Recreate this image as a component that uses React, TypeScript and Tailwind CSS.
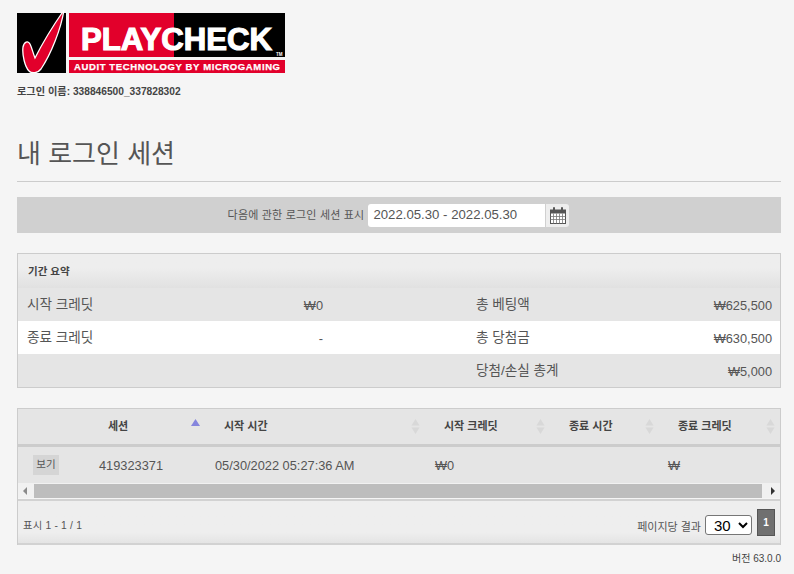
const font = "font-['Liberation_Sans','Noto_Sans_CJK_KR',sans-serif]";

function Logo() {
  return (
    <svg width="268" height="64" viewBox="0 0 268 64" className="block">
      <rect x="0" y="4" width="49" height="60" fill="#000" />
      <rect x="52" y="4" width="105" height="44" fill="#e2002b" />
      <rect x="157" y="4" width="111" height="44" fill="#000" />
      <rect x="52" y="51" width="216" height="13" fill="#e2002b" />
      <path
        d="M47 1 C44 20 34 45 24 60 C21 64 15 65 12 62 C8 58 5 46 6 38 C7 33 11 31 13 35 C15 39 16 44 18 49 C26 33 38 14 47 1 Z"
        fill="#e2002b"
        stroke="#fff"
        strokeWidth="1.3"
      />
      <text
        x="64"
        y="41"
        fontFamily="Liberation Sans"
        fontWeight="700"
        fontSize="32"
        fill="#fff"
        stroke="#fff"
        strokeWidth="1.2"
        textLength="191"
        lengthAdjust="spacingAndGlyphs"
      >
        PLAYCHECK
      </text>
      <text x="259" y="47" fontFamily="Liberation Sans" fontWeight="700" fontSize="4.5" fill="#fff">
        TM
      </text>
      <text
        x="57"
        y="61"
        fontFamily="Liberation Sans"
        fontWeight="700"
        fontSize="9.5"
        fill="#fff"
        stroke="#fff"
        strokeWidth="0.25"
        textLength="206"
        lengthAdjust="spacing"
      >
        AUDIT TECHNOLOGY BY MICROGAMING
      </text>
    </svg>
  );
}

function CalendarIcon() {
  return (
    <svg width="16" height="17" viewBox="0 0 16 17" className="block">
      <rect x="0.5" y="3" width="15" height="13.5" fill="#fff" stroke="#555" />
      <rect x="0.5" y="3" width="15" height="3.5" fill="#555" />
      <path d="M4 1v4M12 1v4" stroke="#555" strokeWidth="2" strokeLinecap="round" />
      <path
        d="M3.5 6.5v10M6.5 6.5v10M9.5 6.5v10M12.5 6.5v10M.5 9.5h15M.5 12.5h15"
        stroke="#777"
        strokeWidth="0.8"
      />
    </svg>
  );
}

function SortIcon({ active }: { active?: boolean }) {
  if (active) {
    return (
      <svg width="9" height="8" viewBox="0 0 9 8" className="block mb-[7px]">
        <path d="M4.5 0L9 7H0Z" fill="#8585dd" />
      </svg>
    );
  }
  return (
    <svg width="9" height="15" viewBox="0 0 9 15" className="block">
      <path d="M4.5 0L8.5 6.5H.5Z" fill="#d8d8d8" />
      <path d="M4.5 15L8.5 8.5H.5Z" fill="#d8d8d8" />
    </svg>
  );
}

const cols = "grid grid-cols-[71px_116px_220px_125px_109px_1fr]";

function Summary() {
  const rows = [
    { bg: "bg-[#e5e5e5]", a: "시작 크레딧", av: "₩0", b: "총 베팅액", bv: "₩625,500" },
    { bg: "bg-white", a: "종료 크레딧", av: "-", b: "총 당첨금", bv: "₩630,500" },
    { bg: "bg-[#e5e5e5]", a: "", av: "", b: "당첨/손실 총계", bv: "₩5,000" },
  ];
  return (
    <section className="mt-5 border border-[#cccccc]">
      <div className="h-[34px] flex items-center pl-[10px] pt-[2px] text-[10.5px] font-bold text-[#444] bg-gradient-to-b from-[#eeeeee] from-40% to-[#e1e1e1]">
        기간 요약
      </div>
      {rows.map((r) => (
        <div
          key={r.b}
          className={`${r.bg} h-[33px] px-[9px] pt-[2px] grid grid-cols-[296px_296px] gap-x-[153px] items-center text-[12.8px] text-[#555]`}
        >
          <div className="flex justify-between items-center">
            <span className="text-[13.6px]">{r.a}</span>
            <span>{r.av}</span>
          </div>
          <div className="flex justify-between items-center">
            <span className="text-[13.6px]">{r.b}</span>
            <span>{r.bv}</span>
          </div>
        </div>
      ))}
    </section>
  );
}

function Sessions() {
  const heads = ["세션", "시작 시간", "시작 크레딧", "종료 시간", "종료 크레딧"];
  return (
    <section className="mt-5 border-x border-t border-[#cccccc]">
      <div className={`${cols} h-[35px] bg-[#e5e5e5] border-b-[3px] border-[#cccccc] box-content`}>
        <div />
        {heads.map((h, i) => (
          <div
            key={h}
            className="flex items-center justify-between pl-[19px] pr-[5px] text-[11px] font-bold text-[#444]"
          >
            <span>{h}</span>
            <SortIcon active={i === 0} />
          </div>
        ))}
      </div>
      <div className={`${cols} h-[36px] bg-[#e5e5e5] items-center text-[12.8px] text-[#555]`}>
        <div className="pl-[15px]">
          <button className="block h-[20px] w-[26px] bg-[#d5d5d5] text-[10.5px] text-[#555]">보기</button>
        </div>
        <div className="pl-[10px] pt-[2px]">419323371</div>
        <div className="pl-[10px] pt-[2px]">05/30/2022 05:27:36 AM</div>
        <div className="pl-[10px] pt-[2px]">₩0</div>
        <div />
        <div className="pl-[9px] pt-[2px]">₩</div>
      </div>
      <div className="h-[15px] flex items-center bg-[#f1f1f1]">
        <svg width="16" height="14" viewBox="0 0 16 14" className="block shrink-0">
          <path d="M5 7l4-4v8Z" fill="#8a8a8a" />
        </svg>
        <div className="h-[14px] w-[728px] bg-[#bdbdbd]" />
        <svg width="14" height="14" viewBox="0 0 14 14" className="block shrink-0 ml-auto">
          <path d="M5 3l4 4-4 4Z" fill="#333" />
        </svg>
      </div>
      <div className="mt-px h-[46px] flex items-end justify-between px-[5px] pb-[7px] border-y-2 border-[#d2d2d2] bg-gradient-to-b from-[#eeeeee] from-75% to-[#e4e4e4]">
        <span className="text-[10.3px] tracking-[0.2px] text-[#555] mb-[3px]">표시 1 - 1 / 1</span>
        <div className="flex items-end">
          <span className="text-[11px] text-[#555] mb-[1px]">페이지당 결과</span>
          <select
            defaultValue="30"
            className="ml-[4px] mb-px h-[20px] w-[47px] bg-white border border-[#767676] rounded-[3px] text-[15px] text-black pl-[4px]"
          >
            <option>30</option>
          </select>
          <div className="ml-[5px] w-[18px] h-[27px] bg-[#707070] border border-[#555] flex items-center justify-center text-[10px] font-bold text-white">
            1
          </div>
        </div>
      </div>
    </section>
  );
}

export default function App() {
  return (
    <div className={`${font} h-[574px] overflow-hidden bg-[#f5f5f5] pt-[9px] pl-[17px] pr-[13px]`}>
      <Logo />
      <div className="mt-[12px] text-[10.2px] leading-[14px] font-bold text-[#444]">
        로그인 이름: 338846500_337828302
      </div>
      <h1 className="mt-[39px] pb-[11px] text-[26px] leading-[32px] text-[#555] border-b border-[#cccccc]">
        내 로그인 세션
      </h1>
      <div className="mt-[15px] h-[36px] bg-[#d0d0d0] flex items-center justify-center pr-px">
        <span className="text-[11px] tracking-[0.2px] text-[#555] mr-[4px]">다음에 관한 로그인 세션 표시</span>
        <div className="w-[177px] h-[23px] bg-white rounded-l-[3px] pl-[5px] flex items-center text-[13.2px] text-[#555]">
          2022.05.30 - 2022.05.30
        </div>
        <div className="ml-px w-[23px] h-[23px] bg-[#eeeeee] rounded-r-[3px] flex items-center justify-center">
          <CalendarIcon />
        </div>
      </div>
      <Summary />
      <Sessions />
      <div className="mt-[6px] text-right text-[10px] text-[#444]">버전 63.0.0</div>
    </div>
  );
}
